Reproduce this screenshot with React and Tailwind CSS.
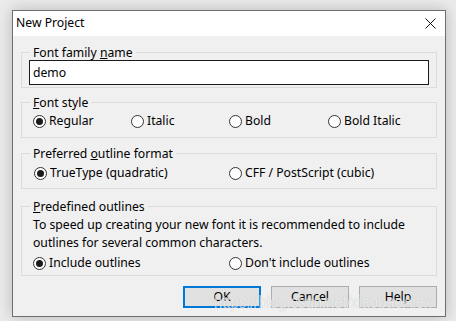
import React, { useState } from "react";

const font = { fontFamily: '"Noto Sans", "Open Sans", sans-serif' };

function Radio({ checked, label, onClick, className = "" }) {
  return (
    <div
      className={"flex items-center h-[16px] cursor-default " + className}
      onClick={onClick}
    >
      <span className="w-[13px] h-[13px] rounded-full border border-[#333333] bg-white flex items-center justify-center shrink-0">
        {checked && <span className="w-[7px] h-[7px] rounded-full bg-[#1a1a1a]" />}
      </span>
      <span className="ml-[3px] text-[12.2px] leading-[16px] text-black whitespace-nowrap">
        {label}
      </span>
    </div>
  );
}

function Group({ title, children, className = "" }) {
  return (
    <div className={"mx-[8px] border border-[#dcdcdc] flex flex-col " + className}>
      <span className="-mt-[8px] ml-[8px] px-[3px] w-fit bg-[#f0f0f0] text-[12.2px] leading-[16px] text-black">
        {title}
      </span>
      {children}
    </div>
  );
}

function App() {
  const [name, setName] = useState("demo");
  const [style, setStyle] = useState(0);
  const [format, setFormat] = useState(0);
  const [outlines, setOutlines] = useState(0);

  return (
    <div className="w-[456px] h-[321px] bg-[#ebebeb] overflow-hidden relative" style={font}>
      <div className="ml-[12px] mt-[10px] w-[434px] h-[307px] border border-[#6e6e6e] bg-[#f0f0f0] shadow-[0_0_14px_rgba(0,0,0,0.22)] flex flex-col">
        <div className="h-[25px] bg-white flex items-center justify-between pl-[3px] pr-[9px] shrink-0">
          <span className="text-[12.2px] text-black">New Project</span>
          <svg width="11" height="11" viewBox="0 0 11 11">
            <path d="M0.5 0.5 L10.5 10.5 M10.5 0.5 L0.5 10.5" stroke="#111" strokeWidth="1" />
          </svg>
        </div>

        <Group title={<>Font family <u>n</u>ame</>} className="mt-[16px] h-[36px]">
          <input
            className="-mt-[1px] ml-[7px] w-[400px] h-[25px] border border-[#1a1a1a] bg-white px-[3px] text-[12.2px] text-black outline-none"
            value={name}
            onChange={(e) => setName(e.target.value)}
          />
        </Group>

        <Group title={<><u>F</u>ont style</>} className="mt-[14px] h-[36px]">
          <div className="mt-[2px] ml-[11px] grid grid-cols-[98px_98px_99px_98px]">
            {["Regular", "Italic", "Bold", "Bold Italic"].map((s, i) => (
              <Radio key={s} label={s} checked={style == i} onClick={() => setStyle(i)} />
            ))}
          </div>
        </Group>

        <Group title={<>Preferred <u>o</u>utline format</>} className="mt-[15px] h-[36px]">
          <div className="mt-[3px] ml-[12px] grid grid-cols-[195px_200px]">
            <Radio label="TrueType (quadratic)" checked={format == 0} onClick={() => setFormat(0)} />
            <Radio label="CFF / PostScript (cubic)" checked={format == 1} onClick={() => setFormat(1)} />
          </div>
        </Group>

        <Group title={<><u>P</u>redefined outlines</>} className="mt-[17px] h-[70px]">
          <p className="ml-[11px] mt-[1px] text-[12.2px] leading-[18px] text-black">
            To speed up creating your new font it is recommended to include
            <br />
            outlines for several common characters.
          </p>
          <div className="mt-[3px] ml-[11px] grid grid-cols-[196px_200px]">
            <Radio label="Include outlines" checked={outlines == 0} onClick={() => setOutlines(0)} />
            <Radio label="Don't include outlines" checked={outlines == 1} onClick={() => setOutlines(1)} />
          </div>
        </Group>

        <div className="mt-[10px] flex justify-end gap-[10px] pr-[8px]">
          <button className="w-[78px] h-[22px] border-2 border-[#0078d7] bg-[#e1e1e1] text-[12.2px] text-black">
            OK
          </button>
          <button className="w-[78px] h-[22px] border border-[#adadad] bg-[#e1e1e1] text-[12.2px] text-black">
            Cancel
          </button>
          <button className="w-[78px] h-[22px] border border-[#adadad] bg-[#e1e1e1] text-[12.2px] text-black">
            Help
          </button>
        </div>
      </div>

      <span
        className="absolute left-[214px] top-[291px] text-[19px] leading-[22px] text-white/70 whitespace-nowrap origin-left scale-x-[0.78] pointer-events-none [text-shadow:0_0_1px_rgba(0,0,0,0.2)]"
        style={{ fontFamily: '"Liberation Sans", Arial, sans-serif' }}
      >
        https://blog.csdn.net/xiaobaoAlex
      </span>
    </div>
  );
}

export default App;
